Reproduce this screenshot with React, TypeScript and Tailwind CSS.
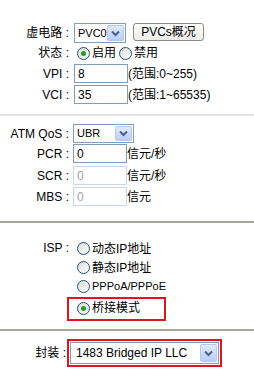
const font = { fontFamily: '"Liberation Sans", "Noto Sans CJK SC", sans-serif' };

function Arrow() {
  return (
    <span className="flex h-full w-[17px] items-center justify-center rounded-[2px] border border-[#b4c8f0] bg-gradient-to-b from-[#e1eafe] to-[#b9cdf7]">
      <svg width="9" height="7" viewBox="0 0 9 7">
        <path d="M1 1.5 L4.5 5 L8 1.5" fill="none" stroke="#4d6185" strokeWidth="2" />
      </svg>
    </span>
  );
}

function Select({ value, width, big }: { value: string; width: string; big?: boolean }) {
  return (
    <div className={`flex h-full ${width} items-center border border-[#7f9db9] bg-white p-[1px]`}>
      <span className={`flex-1 truncate pl-[2px] text-black ${big ? 'pl-[4px] text-[12px]' : 'text-[11px]'}`}>{value}</span>
      <Arrow />
    </div>
  );
}

function Field({ value, disabled }: { value: string; disabled?: boolean }) {
  return (
    <div
      className={`flex h-[19px] w-[54px] items-center border pl-[3px] text-[12px] ${
        disabled ? 'border-[#c9d7e6] text-[#a0a0a0]' : 'border-[#7f9db9] text-black'
      }`}
    >
      {value}
    </div>
  );
}

function Radio({ checked }: { checked?: boolean }) {
  return (
    <span className="mr-[2px] flex h-[13px] w-[13px] items-center justify-center rounded-full border border-[#1c5180] bg-gradient-to-br from-[#dcdcd6] to-white">
      {checked && <span className="h-[5px] w-[5px] rounded-full bg-[#21a121]" />}
    </span>
  );
}

function Label({ text }: { text: string }) {
  return <div className="w-[70px] shrink-0 pr-[1px] text-right">{text}</div>;
}

export default function App() {
  return (
    <div className="h-[374px] w-[254px] bg-white text-[12px] text-black" style={font}>
      <div className="flex flex-col pt-[23px]">
        <div className="flex h-[20px] items-center">
          <Label text="虚电路 :" />
          <div className="ml-[4px] h-[20px]">
            <Select value="PVC0" width="w-[52px]" />
          </div>
          <button className="ml-[7px] flex h-[18px] w-[71px] items-center justify-center self-start rounded-[3px] border border-[#8a8a8a] bg-gradient-to-b from-white to-[#ecebe6] text-[12px]">
            PVCs概况
          </button>
        </div>

        <div className="flex h-[20px] items-center">
          <Label text="状态 :" />
          <div className="ml-[7px] flex items-center">
            <Radio checked />
            <span>启用</span>
            <span className="ml-[3px]" />
            <Radio />
            <span>禁用</span>
          </div>
        </div>

        <div className="mt-[1px] flex h-[19px] items-center">
          <Label text="VPI :" />
          <div className="ml-[4px]">
            <Field value="8" />
          </div>
          <span>(范围:0~255)</span>
        </div>

        <div className="mt-[2px] flex h-[19px] items-center">
          <Label text="VCI :" />
          <div className="ml-[4px]">
            <Field value="35" />
          </div>
          <span>(范围:1~65535)</span>
        </div>

        <div className="mt-[10px] h-[2px] bg-[#e2e2e2]" />

        <div className="mt-[8px] flex h-[19px] items-center">
          <Label text="ATM QoS :" />
          <div className="ml-[3px] h-[19px]">
            <Select value="UBR" width="w-[61px]" />
          </div>
        </div>

        <div className="mt-[1px] flex h-[19px] items-center">
          <Label text="PCR :" />
          <div className="ml-[3px]">
            <Field value="0" />
          </div>
          <span>信元/秒</span>
        </div>

        <div className="mt-[3px] flex h-[19px] items-center">
          <Label text="SCR :" />
          <div className="ml-[3px]">
            <Field value="0" disabled />
          </div>
          <span>信元/秒</span>
        </div>

        <div className="mt-[2px] flex h-[19px] items-center">
          <Label text="MBS :" />
          <div className="ml-[3px]">
            <Field value="0" disabled />
          </div>
          <span>信元</span>
        </div>

        <div className="mt-[15px] h-[2px] bg-[#a5a898]" />

        <div className="mt-[16px] flex">
          <Label text="ISP :" />
          <div className="flex flex-col">
            <div className="ml-[7px] flex h-[19px] items-center">
              <Radio />
              <span>动态IP地址</span>
            </div>
            <div className="ml-[7px] flex h-[19px] items-center">
              <Radio />
              <span>静态IP地址</span>
            </div>
            <div className="ml-[7px] flex h-[19px] items-center text-[11px]">
              <Radio />
              <span>PPPoA/PPPoE</span>
            </div>
            <div className="-ml-[3px] mt-[1px] flex h-[24px] w-[99px] items-start border-2 border-[#e0141c] pl-[8px] pt-[1px]">
              <div className="flex h-[16px] items-center">
                <Radio checked />
                <span>桥接模式</span>
              </div>
            </div>
          </div>
        </div>

        <div className="mt-[8px] h-[2px] bg-[#a8a8a2]" />

        <div className="mt-[8px] flex h-[28px] items-center">
          <div className="w-[66px] shrink-0 text-right">封装 :</div>
          <div className="ml-[1px] h-[28px] w-[155px] border-2 border-[#e0141c] p-[1px]">
            <Select value="1483 Bridged IP LLC" width="w-full" big />
          </div>
        </div>
      </div>
    </div>
  );
}
